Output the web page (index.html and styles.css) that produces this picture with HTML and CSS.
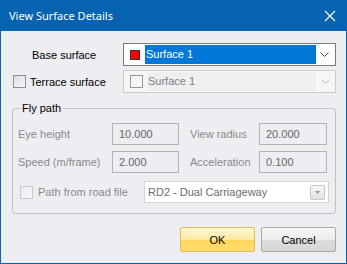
FILE: index.html
```html
<!DOCTYPE html>
<html lang="en">
  <head>
    <meta charset="UTF-8" />
    <title>View Surface Details</title>
    <link rel="stylesheet" href="styles.css">
  </head>
  <body>
    <div class="win">
      <div class="titleBar">
        <span class="title">View Surface Details</span>
        <svg class="closeIcon" width="12" height="12" viewBox="0 0 12 12">
          <path d="M1 1 L11 11 M11 1 L1 11" stroke="#fff" stroke-width="1.2" fill="none" />
        </svg>
      </div>
      <div class="content">
        <div class="surfRow">
          <label class="baseLabel">Base surface</label>
          <div class="combo active">
            <span class="swatch"></span>
            <span class="selText">Surface 1</span>
            <svg class="chev" width="9" height="5" viewBox="0 0 9 5">
              <path d="M0.5 0.5 L4.5 4.5 L8.5 0.5" stroke="#444" fill="none" />
            </svg>
          </div>
        </div>
        <div class="surfRow">
          <label class="checkLabel"><span class="chk"></span>Terrace surface</label>
          <div class="combo disabled">
            <span class="emptyBox"></span>
            <span class="grayText">Surface 1</span>
            <span class="chevArea">
              <svg class="chev" width="9" height="5" viewBox="0 0 9 5">
                <path d="M0.5 0.5 L4.5 4.5 L8.5 0.5" stroke="#bbb" fill="none" />
              </svg>
            </span>
          </div>
        </div>

        <fieldset class="flyPath">
          <legend>Fly path</legend>
          <div class="flyGrid">
            <span class="dimLabel">Eye height</span>
            <div class="numBox">10.000</div>
            <span class="dimLabel right">View radius</span>
            <div class="numBox">20.000</div>
            <span class="dimLabel">Speed (m/frame)</span>
            <div class="numBox">2.000</div>
            <span class="dimLabel right">Acceleration</span>
            <div class="numBox">0.100</div>
          </div>
          <div class="roadRow">
            <label class="dimLabel roadLabel"><span class="chk faint"></span>Path from road file</label>
            <div class="roadCombo">
              <span>RD2 - Dual Carriageway</span>
              <span class="dropBtn">
                <svg width="5" height="3" viewBox="0 0 5 3"><path d="M0 0 H5 L2.5 3 Z" fill="#9a9a9a" /></svg>
              </span>
            </div>
          </div>
        </fieldset>

        <div class="buttons">
          <button class="btn okBtn">OK</button>
          <button class="btn">Cancel</button>
        </div>
      </div>
    </div>
  </body>
</html>
```

FILE: styles.css
```css
html, body {
  margin: 0;
  padding: 0;
}
body {
  font-family: 'Liberation Sans', Arial, sans-serif;
  font-size: 11px;
  color: #000;
  background: #fff;
  white-space: nowrap;
}
.win {
  width: 347px;
  height: 264px;
  display: flex;
  flex-direction: column;
}
.titleBar {
  height: 31px;
  flex-shrink: 0;
  background: #0563b2;
  color: #fff;
  display: flex;
  align-items: center;
  justify-content: space-between;
  padding: 0 11px 0 9px;
  font-family: 'Noto Sans', sans-serif;
  font-size: 11px;
}
.closeIcon {
  margin-top: 1px;
}
.content {
  flex: 1;
  background: #eeedf2;
  border: 1px solid #0563b2;
  border-top: none;
  padding: 12px 10px 0 12px;
}
.surfRow {
  display: flex;
  align-items: center;
  height: 23px;
  margin-bottom: 4px;
}
.baseLabel {
  width: 91px;
  padding-left: 19px;
}
.checkLabel {
  width: 110px;
  display: flex;
  align-items: center;
}
.chk {
  width: 11px;
  height: 11px;
  border: 1px solid #8f8f8f;
  background: linear-gradient(135deg, #dcdcdc, #f8f8f8);
  margin-right: 4px;
  box-sizing: content-box;
}
.chk.faint {
  border-color: #c9c9c9;
  background: linear-gradient(135deg, #e9e9e9, #f9f9f9);
}
.combo {
  width: 213px;
  height: 23px;
  box-sizing: border-box;
  display: flex;
  align-items: center;
  padding: 1px;
}
.combo.active {
  background: #fff;
  border: 1px solid #7a7a7a;
}
.combo.disabled {
  background: #f6f6f6;
  border: 1px solid #cccccc;
}
.swatch {
  width: 8px;
  height: 8px;
  background: #ff0000;
  border: 1px solid #333;
  margin: 0 5px 0 5px;
}
.selText {
  flex: 1;
  align-self: stretch;
  background: #0078d7;
  color: #fff;
  line-height: 19px;
  padding-left: 1px;
  margin-right: 4px;
}
.chev {
  margin-right: 5px;
}
.emptyBox {
  width: 11px;
  height: 11px;
  border: 1px solid #999;
  margin: 0 4px 0 5px;
}
.grayText {
  flex: 1;
  align-self: stretch;
  line-height: 19px;
  color: #7c7c7c;
  background: #efefef;
  padding-left: 1px;
}
.chevArea {
  width: 18px;
  display: flex;
  justify-content: center;
}
.chevArea .chev {
  margin: 0;
}
.flyPath {
  margin: 8px 0 0 -1px;
  padding: 7px 6px 6px 5px;
  width: 323px;
  height: 113px;
  box-sizing: border-box;
  border: 1px solid #c3c3c3;
  border-radius: 3px;
}
.flyPath legend {
  padding: 0 2px 0 1px;
  margin-left: 3px;
  line-height: 15px;
  color: #000;
}
.flyGrid {
  display: grid;
  grid-template-columns: 94px 67px 80px 68px;
  row-gap: 6px;
  align-items: center;
}
.dimLabel {
  color: #8a8a8a;
}
.dimLabel.right {
  padding-left: 11px;
}
.numBox {
  height: 22px;
  box-sizing: border-box;
  border: 1px solid #b3b3b3;
  background: #eeedf2;
  color: #666;
  line-height: 20px;
  padding-left: 6px;
}
.roadRow {
  display: flex;
  align-items: center;
  margin-top: 8px;
}
.roadLabel {
  display: flex;
  align-items: center;
  width: 124px;
  padding-left: 2px;
}
.roadLabel .chk {
  margin-right: 5px;
}
.roadCombo {
  width: 185px;
  height: 22px;
  box-sizing: border-box;
  border: 1px solid #d4d4d4;
  background: #fff;
  color: #6d6d6d;
  display: flex;
  align-items: center;
  justify-content: space-between;
  padding: 0 3px 0 3px;
}
.dropBtn {
  width: 15px;
  height: 15px;
  box-sizing: border-box;
  border: 1px solid #c8c8c8;
  border-radius: 2px;
  background: linear-gradient(#f7f7f7, #e2e2e2);
  display: flex;
  align-items: center;
  justify-content: center;
}
.buttons {
  display: flex;
  justify-content: flex-end;
  gap: 6px;
  margin-top: 13px;
}
.btn {
  width: 75px;
  height: 25px;
  font-family: inherit;
  font-size: 11px;
  color: #000;
  border: 1px solid #a8a8a8;
  border-radius: 2px;
  background: linear-gradient(#f7f7f7 0%, #ececec 50%, #dcdcdc 51%, #d6d6d6 100%);
  padding: 0;
}
.okBtn {
  border-color: #e3bc5a;
  background: linear-gradient(#fff6d6 0%, #ffe9a2 50%, #ffd65a 51%, #ffdd70 100%);
}
```
